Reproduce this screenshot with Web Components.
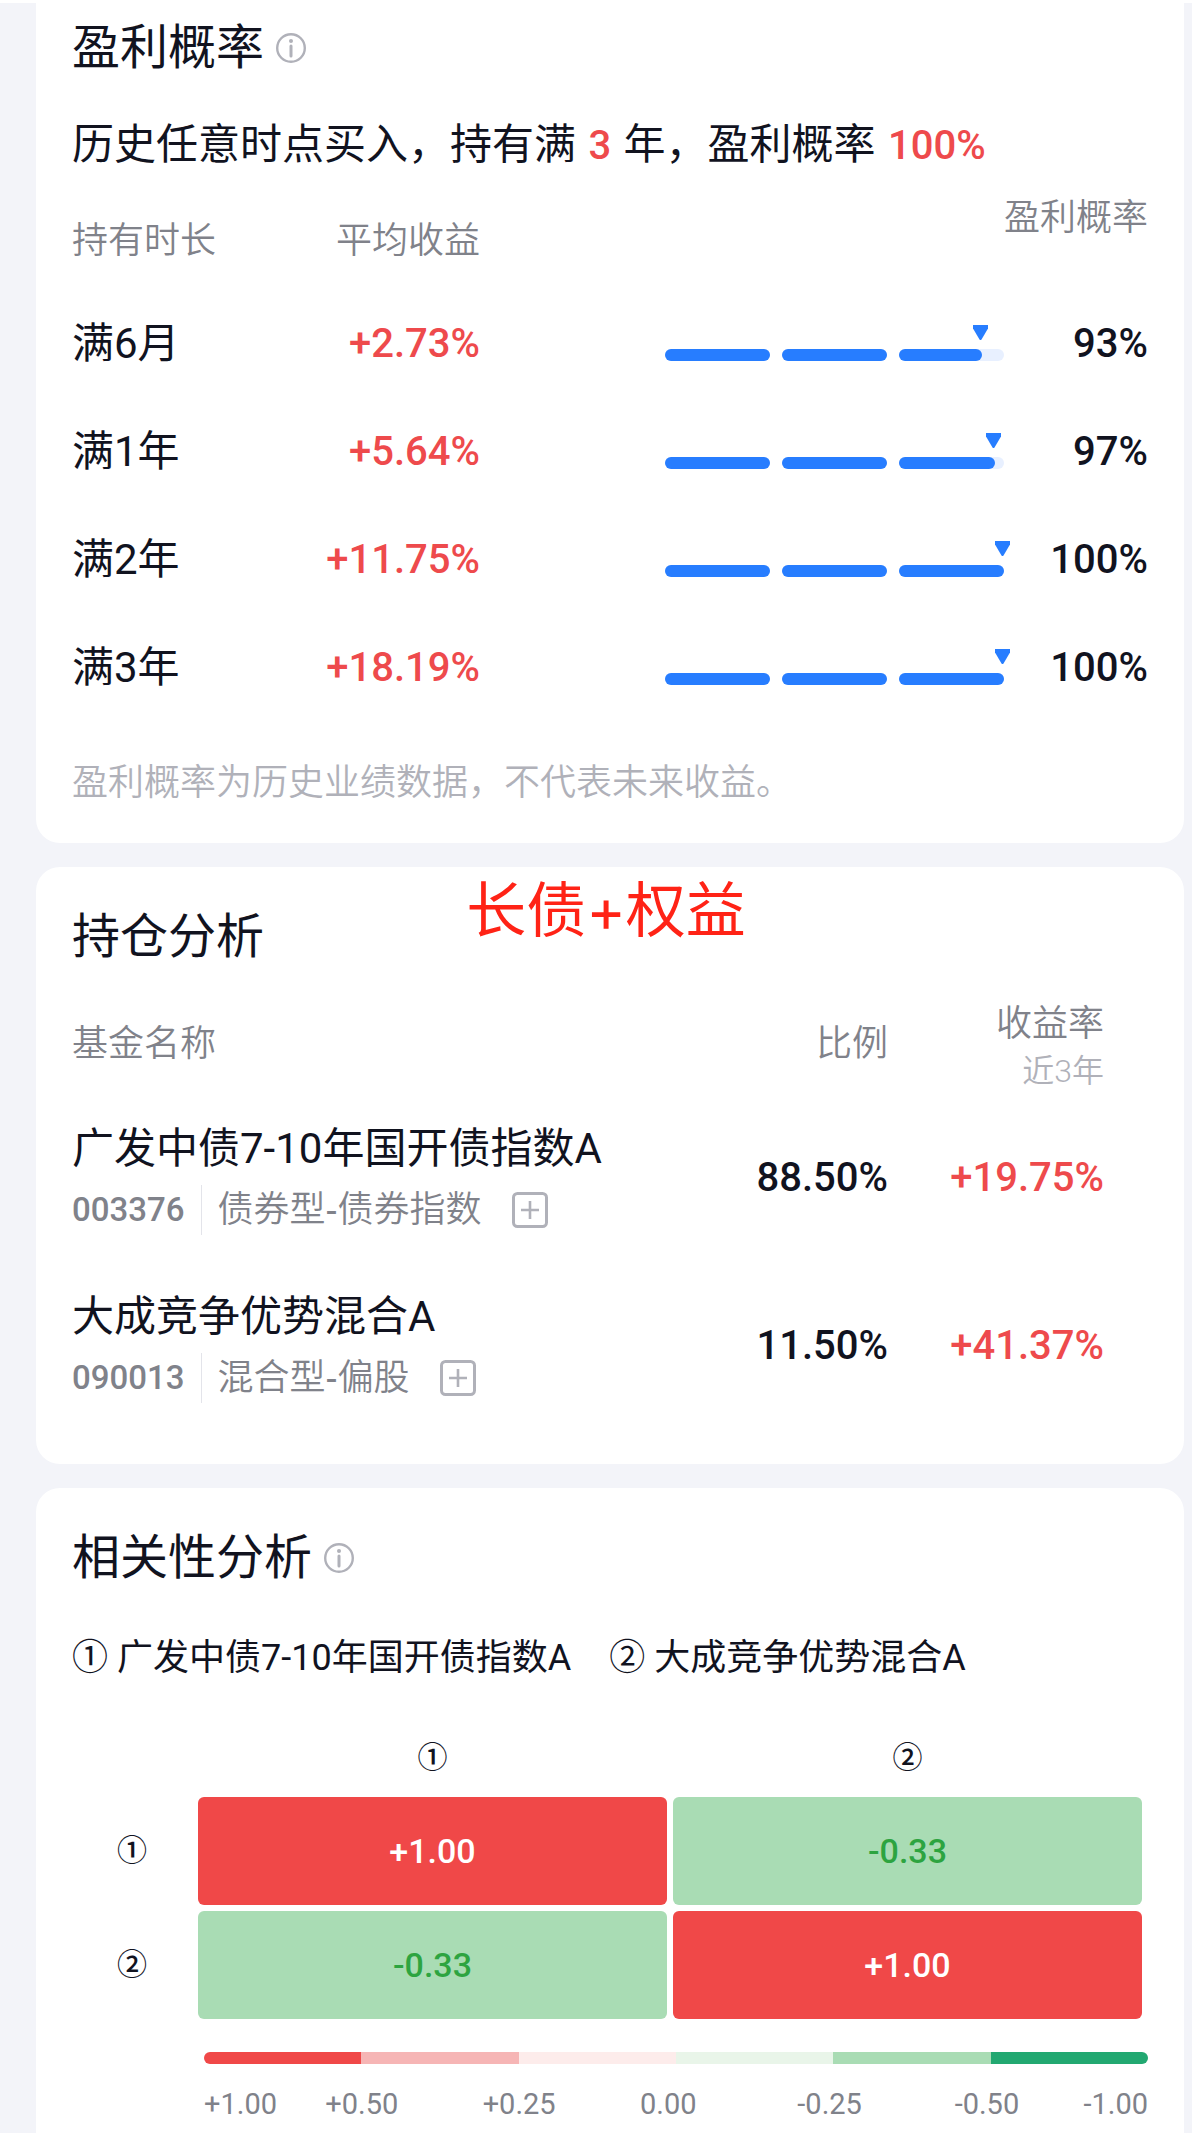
<!DOCTYPE html>
<html lang="zh-CN">
<head>
<meta charset="utf-8">
<meta name="viewport" content="width=device-width, initial-scale=1">
<title>组合分析</title>
<style>
    :root {
        --ink: #11131f;
        --grey: #80828a;
        --pale: #b0b1b9;
        --up: #ee4a4c;
        --blue: #277dff;
        --page: #f3f4f9;
    }
    body {
        margin: 0;
        background: var(--page);
        color: var(--ink);
        font-family: Roboto, "Noto Sans CJK SC", sans-serif;
    }
</style>
</head>
<body>
<fund-page>
    <fund-card first>
        <card-title info>盈利概率</card-title>
        <profit-summary years="3" chance="100%"></profit-summary>
        <profit-table></profit-table>
        <foot-note>盈利概率为历史业绩数据，不代表未来收益。</foot-note>
    </fund-card>
    <fund-card>
        <card-title>持仓分析</card-title>
        <user-mark>长债+权益</user-mark>
        <holding-table></holding-table>
    </fund-card>
    <fund-card last>
        <card-title info>相关性分析</card-title>
        <fund-legend></fund-legend>
        <correlation-matrix></correlation-matrix>
        <colour-scale></colour-scale>
    </fund-card>
</fund-page>

<script>
const FUNDS = [
    { mark: "①", name: "广发中债7-10年国开债指数A", code: "003376", type: "债券型-债券指数", ratio: "88.50%", gain: "+19.75%" },
    { mark: "②", name: "大成竞争优势混合A", code: "090013", type: "混合型-偏股", ratio: "11.50%", gain: "+41.37%" },
];

const PERIODS = [
    { name: "满6月", gain: "+2.73%", chance: 93 },
    { name: "满1年", gain: "+5.64%", chance: 97 },
    { name: "满2年", gain: "+11.75%", chance: 100 },
    { name: "满3年", gain: "+18.19%", chance: 100 },
];

const MATRIX = [
    ["+1.00", "-0.33"],
    ["-0.33", "+1.00"],
];

class BaseElement extends HTMLElement {
    constructor() {
        super();
        this.attachShadow({ mode: "open" });
    }

    connectedCallback() {
        this.shadowRoot.innerHTML = this.render();
    }
}

class FundPage extends BaseElement {
    render() {
        return `
            <style>
                :host {
                    display: flex;
                    flex-direction: column;
                    gap: 24px;
                    box-sizing: border-box;
                    min-height: 100vh;
                    padding: 0 8px 0 36px;
                    border-top: 3px solid #fff;
                }
            </style>
            <slot></slot>
        `;
    }
}

class FundCard extends BaseElement {
    render() {
        return `
            <style>
                :host {
                    display: block;
                    position: relative;
                    padding: 41px 36px 34px;
                    border-radius: 24px;
                    background: #fff;
                }
                :host([first]) {
                    padding-top: 16px;
                    padding-bottom: 36px;
                    border-radius: 0 0 24px 24px;
                }
                :host([last]) {
                    flex: 1;
                    padding-bottom: 12px;
                    border-radius: 24px 24px 0 0;
                }
            </style>
            <slot></slot>
        `;
    }
}

class CardTitle extends BaseElement {
    render() {
        return `
            <style>
                :host { display: flex; align-items: center; gap: 12px; }
                h2 { margin: 0; font-size: 48px; line-height: 58px; font-weight: 400; }
                button { display: block; padding: 0; border: 0; background: none; color: var(--pale); }
                svg { display: block; width: 30px; height: 30px; }
            </style>
            <h2><slot></slot></h2>
            ${this.hasAttribute("info") ? `
                <button type="button" aria-label="说明">
                    <svg viewBox="0 0 30 30" fill="none" stroke="currentColor">
                        <circle cx="15" cy="15" r="13.8" stroke-width="2.4"/>
                        <circle cx="15" cy="8" r="2" fill="currentColor" stroke="none"/>
                        <path d="M15 13v10" stroke-width="3" stroke-linecap="round"/>
                    </svg>
                </button>` : ""}
        `;
    }
}

class ProfitSummary extends BaseElement {
    render() {
        return `
            <style>
                :host { display: block; margin-top: 40px; }
                p { margin: 0; font-size: 42px; line-height: 56px; }
                b { margin: 0 2px; color: var(--up); font-weight: 500; font-size: 40px; }
            </style>
            <p>历史任意时点买入，持有满 <b>${this.getAttribute("years")}</b> 年，盈利概率 <b>${this.getAttribute("chance")}</b></p>
        `;
    }
}

class ProfitTable extends BaseElement {
    render() {
        return `
            <style>
                :host { display: block; margin-top: 18px; }
                table { width: 100%; table-layout: fixed; border-collapse: collapse; }
                th, td { padding: 0; text-align: right; }
                th:first-child { text-align: left; }
                thead th { height: 98px; font-size: 36px; line-height: 36px; font-weight: 350; color: var(--grey); }
                thead th:last-child { padding-top: 8px; height: 90px; vertical-align: top; }
                tbody th { height: 108px; font-size: 42px; line-height: 56px; font-weight: 400; }
                td { font-size: 40px; line-height: 48px; font-weight: 500; }
                .short { width: 204px; }
                .last { width: 144px; }
                .up { color: var(--up); }
            </style>
            <table>
                <colgroup><col class="short"><col class="short"><col><col class="last"></colgroup>
                <thead>
                    <tr><th scope="col">持有时长</th><th scope="col">平均收益</th><th scope="col" colspan="2">盈利概率</th></tr>
                </thead>
                <tbody>
                    ${PERIODS.map(p => `
                        <tr>
                            <th scope="row">${p.name}</th>
                            <td class="up">${p.gain}</td>
                            <td><chance-gauge value="${p.chance}"></chance-gauge></td>
                            <td>${p.chance}%</td>
                        </tr>`).join("")}
                </tbody>
            </table>
        `;
    }
}

// three equal segments, filled one after another
class ChanceGauge extends BaseElement {
    render() {
        const value = Number(this.getAttribute("value"));
        const fill = i => Math.max(0, Math.min(100, value * 3 - i * 100));
        return `
            <style>
                :host {
                    display: grid;
                    grid-template-columns: repeat(3, 1fr);
                    gap: 12px;
                    margin-left: 185px;
                    padding-top: 22px;
                }
                .track { position: relative; height: 12px; border-radius: 6px; background: #e8f0ff; }
                .fill { height: 12px; border-radius: 6px; background: var(--blue); }
                svg { position: absolute; top: -24px; width: 15px; height: 15px; transform: translateX(-9px); fill: var(--blue); }
            </style>
            ${[0, 1, 2].map(i => `
                <div class="track">
                    <div class="fill" style="width: ${fill(i)}%"></div>
                    ${i == 2 ? `<svg viewBox="0 0 15 15" style="left: ${fill(i)}%"><path d="M0 0h15v3.5L8.5 14.5q-1 1-2 0L0 3.5z"/></svg>` : ""}
                </div>`).join("")}
        `;
    }
}

class FootNote extends BaseElement {
    render() {
        return `
            <style>
                :host { display: block; margin-top: 37px; }
                p { margin: 0; font-size: 36px; line-height: 48px; font-weight: 350; color: var(--pale); }
            </style>
            <p><slot></slot></p>
        `;
    }
}

// remark lying over the card
class UserMark extends BaseElement {
    render() {
        return `
            <style>
                :host {
                    position: absolute;
                    top: 7px;
                    left: 0;
                    right: 8px;
                    text-align: center;
                    font-family: Inter, "Noto Sans CJK SC", sans-serif;
                    font-size: 60px;
                    line-height: 72px;
                    color: #ff2316;
                    pointer-events: none;
                }
            </style>
            <slot></slot>
        `;
    }
}

class HoldingTable extends BaseElement {
    render() {
        return `
            <style>
                :host { display: block; margin: 34px 44px 0 0; }
                table { width: 100%; table-layout: fixed; border-collapse: collapse; }
                th, td { padding: 0; text-align: right; }
                th:first-child { text-align: left; }
                thead th { padding-bottom: 6px; font-size: 36px; line-height: 48px; font-weight: 350; color: var(--grey); }
                thead th:last-child { padding-bottom: 0; }
                small { display: block; font-size: 32px; line-height: 46px; color: var(--pale); }
                tbody th { height: 168px; font-weight: 400; }
                td { font-size: 40px; line-height: 48px; font-weight: 500; }
                .name { width: 58%; }
                .gain { width: 216px; }
                .up { color: var(--up); }
                h3 { margin: 0 0 8px; font-size: 42px; line-height: 56px; font-weight: 400; white-space: nowrap; }
                .meta { display: flex; align-items: center; height: 50px; color: var(--grey); }
                .code { padding-right: 16px; font-size: 33px; font-weight: 500; line-height: 50px; }
                .type {
                    padding-left: 16px;
                    border-left: 1px solid #e3e4ea;
                    font-family: "Liberation Sans", "Noto Sans CJK SC", sans-serif;
                    font-size: 36px;
                    font-weight: 350;
                    line-height: 50px;
                }
                button { margin: 0 0 0 30px; padding: 0; border: 0; background: none; color: var(--pale); }
                svg { display: block; width: 36px; height: 36px; }
            </style>
            <table>
                <colgroup><col class="name"><col><col class="gain"></colgroup>
                <thead>
                    <tr><th scope="col">基金名称</th><th scope="col">比例</th><th scope="col">收益率<small>近3年</small></th></tr>
                </thead>
                <tbody>
                    ${FUNDS.map(f => `
                        <tr>
                            <th scope="row">
                                <h3>${f.name}</h3>
                                <div class="meta">
                                    <span class="code">${f.code}</span>
                                    <span class="type">${f.type}</span>
                                    <button type="button" aria-label="添加自选">
                                        <svg viewBox="0 0 36 36" fill="none" stroke="currentColor" stroke-width="3">
                                            <rect x="1.5" y="1.5" width="33" height="33" rx="4"/>
                                            <path d="M9 18h18M18 9v18" stroke-width="2.6"/>
                                        </svg>
                                    </button>
                                </div>
                            </th>
                            <td>${f.ratio}</td>
                            <td class="up">${f.gain}</td>
                        </tr>`).join("")}
                </tbody>
            </table>
        `;
    }
}

class FundLegend extends BaseElement {
    render() {
        return `
            <style>
                :host { display: block; margin-top: 47px; }
                ul {
                    display: flex;
                    flex-wrap: wrap;
                    gap: 0 38px;
                    margin: 0;
                    padding: 0;
                    list-style: none;
                    font-size: 36px;
                    line-height: 48px;
                }
                li { display: flex; gap: 9px; }
            </style>
            <ul>
                ${FUNDS.map(f => `<li><span>${f.mark}</span><span>${f.name}</span></li>`).join("")}
            </ul>
        `;
    }
}

class CorrelationMatrix extends BaseElement {
    render() {
        return `
            <style>
                :host { display: block; margin: 37px 0 0 -6px; }
                table { width: 100%; table-layout: fixed; border-collapse: separate; border-spacing: 6px; }
                th, td { padding: 0; text-align: center; }
                th { font-size: 30px; line-height: 36px; font-weight: 500; }
                thead th { height: 66px; }
                .side { width: 120px; }
                tbody td { height: 108px; border-radius: 6px; font-size: 34px; line-height: 40px; font-weight: 500; }
                .plus { background: #f04848; color: #fff; }
                .minus { background: #a9dcb4; color: #2da440; }
            </style>
            <table>
                <colgroup><col class="side"><col><col></colgroup>
                <thead>
                    <tr><td></td>${FUNDS.map(f => `<th scope="col">${f.mark}</th>`).join("")}</tr>
                </thead>
                <tbody>
                    ${MATRIX.map((row, i) => `
                        <tr>
                            <th scope="row">${FUNDS[i].mark}</th>
                            ${row.map(v => `<td class="${v[0] == "+" ? "plus" : "minus"}">${v}</td>`).join("")}
                        </tr>`).join("")}
                </tbody>
            </table>
        `;
    }
}

class ColourScale extends BaseElement {
    render() {
        const colours = ["#f04848", "#f6b5b5", "#fdeceb", "#e9f5e9", "#a9dcb4", "#22a871"];
        const labels = ["+1.00", "+0.50", "+0.25", "0.00", "-0.25", "-0.50", "-1.00"];
        return `
            <style>
                :host { display: block; margin: 27px 0 0 132px; }
                .bar { display: flex; height: 12px; border-radius: 6px; overflow: hidden; }
                .bar span { flex: 1; }
                .labels {
                    display: grid;
                    grid-template-columns: calc(100% / 6 - 36px) repeat(4, calc(100% / 6)) 1fr auto;
                    margin-top: 22px;
                    font-size: 29px;
                    line-height: 36px;
                    color: var(--grey);
                }
            </style>
            <div class="bar">${colours.map(c => `<span style="background: ${c}"></span>`).join("")}</div>
            <div class="labels">${labels.map(l => `<span>${l}</span>`).join("")}</div>
        `;
    }
}

customElements.define("fund-page", FundPage);
customElements.define("fund-card", FundCard);
customElements.define("card-title", CardTitle);
customElements.define("profit-summary", ProfitSummary);
customElements.define("profit-table", ProfitTable);
customElements.define("chance-gauge", ChanceGauge);
customElements.define("foot-note", FootNote);
customElements.define("user-mark", UserMark);
customElements.define("holding-table", HoldingTable);
customElements.define("fund-legend", FundLegend);
customElements.define("correlation-matrix", CorrelationMatrix);
customElements.define("colour-scale", ColourScale);
</script>
</body>
</html>
